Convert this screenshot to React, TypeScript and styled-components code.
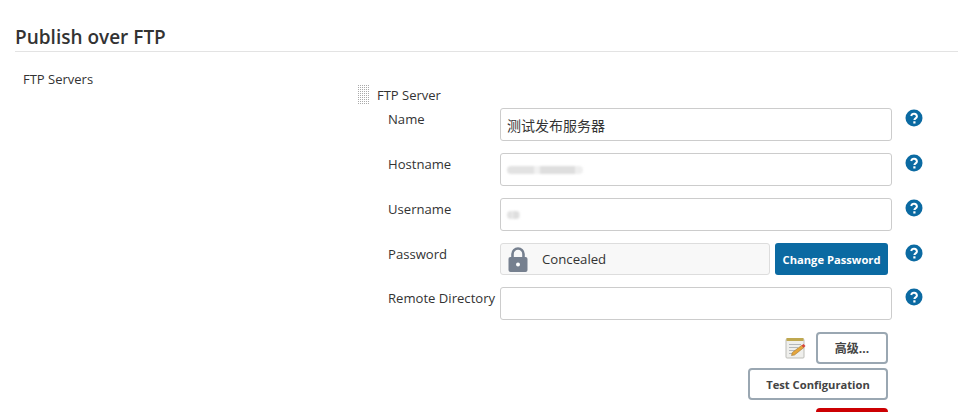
import React from "react";
import styled, { createGlobalStyle } from "styled-components";

const Global = createGlobalStyle`
  html, body { margin: 0; padding: 0; background: #fff; height: 412px; overflow: hidden; }
  body { font-family: "Open Sans", "Noto Sans", "Noto Sans CJK SC", sans-serif; color: #333; }
`;

const Page = styled.div`
  width: 958px;
  height: 412px;
  overflow: hidden;
  padding: 25px 0 0 15px;
  box-sizing: border-box;
`;

const SectionHeader = styled.h2`
  margin: 0;
  height: 26px;
  font-size: 19px;
  line-height: 24px;
  font-weight: 600;
  color: #333;
  border-bottom: 1px solid #e3e3e3;
`;

const Body = styled.div`
  display: grid;
  grid-template-columns: 342px 1fr;
`;

const TopLabel = styled.div`
  padding: 18px 0 0 8px;
  font-size: 13px;
  line-height: 18px;
  color: #333;
`;

const Server = styled.div`
  padding-top: 32px;
`;

const ServerHead = styled.div`
  display: flex;
  align-items: center;
  gap: 8px;
  height: 22px;
  font-size: 13px;
  color: #333;
`;

const Rows = styled.div`
  display: flex;
  flex-direction: column;
  gap: 12px;
  padding: 2px 0 0 31px;
`;

const Row = styled.div<{ $h: number }>`
  display: grid;
  grid-template-columns: 112px 392px auto;
  height: ${(p) => p.$h}px;
`;

const RowLabel = styled.div`
  font-size: 13.1px;
  line-height: 18px;
  padding-top: 2px;
  color: #333;
  white-space: nowrap;
`;

const Field = styled.div`
  position: relative;
  box-sizing: border-box;
  height: 33px;
  border: 1px solid #ccc;
  border-radius: 3px;
  background: #fff;
  display: flex;
  align-items: center;
  padding-left: 6px;
  font-size: 14px;
  font-family: "Open Sans", "Noto Sans CJK SC", sans-serif;
  color: #333;
`;

const Blur = styled.span<{ $w: number }>`
  display: block;
  width: ${(p) => p.$w}px;
  height: 8px;
  border-radius: 4px;
  background: linear-gradient(90deg, #e2e2e2 0 36%, #f1f1f1 36% 44%, #dedede 44% 90%, #eeeeee 90% 100%);
  filter: blur(1px);
`;

const PasswordWrap = styled.div`
  display: flex;
  gap: 5px;
`;

const Concealed = styled.div`
  box-sizing: border-box;
  width: 270px;
  height: 32px;
  border: 1px solid #ddd;
  border-radius: 3px;
  background: #f8f8f8;
  display: flex;
  align-items: center;
  gap: 14px;
  padding-left: 7px;
  font-size: 13.2px;
  color: #333;
`;

const PrimaryButton = styled.button`
  width: 113px;
  height: 32px;
  padding: 0;
  border: none;
  border-radius: 3px;
  background: #0b6aa2;
  color: #fff;
  font-family: inherit;
  font-size: 11.2px;
  font-weight: 700;
`;

const HelpCell = styled.div`
  padding: 1px 0 0 13px;
  height: 18px;
`;

const Actions = styled.div`
  display: flex;
  flex-direction: column;
  align-items: flex-end;
  width: 531px;
  margin-top: 12px;
  gap: 4px;
`;

const ActionRow = styled.div`
  display: flex;
  align-items: center;
  gap: 9px;
`;

const OutlineButton = styled.button<{ $w: number }>`
  box-sizing: border-box;
  width: ${(p) => p.$w}px;
  height: 32px;
  padding: 0;
  background: #fff;
  border: 2px solid #9aa7b2;
  border-radius: 4px;
  color: #444;
  font-family: "Open Sans", "Noto Sans CJK SC", sans-serif;
  font-size: ${(p) => (p.$w > 100 ? 11.2 : 12)}px;
  font-weight: 700;
`;

const DangerButton = styled.button`
  width: 72px;
  height: 32px;
  margin-top: 4px;
  border: none;
  border-radius: 4px;
  background: #cc0003;
  flex: none;
`;

const Help = () => (
  <svg width="18" height="18" viewBox="0 0 18 18">
    <circle cx="9" cy="9" r="8.5" fill="#0b6aa2" />
    <path d="M6.2 7a2.9 2.9 0 0 1 5.7.4c0 1.900-2.500 2-2.500 3.600" fill="none" stroke="#fff" strokeWidth="2" />
    <rect x="8.300" y="12.300" width="2.200" height="2.200" fill="#fff" />
  </svg>
);

const Handle = () => (
  <svg width="12" height="20" viewBox="0 0 12 20">
    {Array.from({ length: 10 }).flatMap((_, r) =>
      Array.from({ length: 6 }).map((_, c) => (
        <rect key={`${r}-${c}`} x={c * 2 + 1} y={r * 2} width="1" height="1" fill="#aaa" />
      ))
    )}
  </svg>
);

const Lock = () => (
  <svg width="20" height="25" viewBox="0 0 20 25">
    <path d="M4.500 11V7a5.500 5.500 0 0 1 11 0v4" fill="none" stroke="#76808f" strokeWidth="2.600" />
    <rect x="0.500" y="10" width="19" height="15" rx="2" fill="#76808f" />
    <circle cx="10" cy="17.500" r="2" fill="#fff" />
  </svg>
);

const Notepad = () => (
  <svg width="22" height="22" viewBox="0 0 22 22">
    <rect x="1" y="2" width="18" height="19" rx="1" fill="#efefec" stroke="#bdbdb8" />
    <rect x="1.500" y="1" width="17" height="3" fill="#bfa850" />
    <path d="M4 7.500h12M4 10.500h9M4 13.500h6M4 16.500h4" stroke="#b4b8bc" strokeWidth="1" />
    <path d="M6.500 18.500l.8-3L16.500 8.500l2.200 2.200L9.500 18z" fill="#e6a63c" stroke="#8f6a26" strokeWidth="0.500" />
    <path d="M16.500 8.500l2-1.500 2 2-1.800 1.700z" fill="#d8453c" />
  </svg>
);

const FormRow = ({ label, h = 33, children }: { label: string; h?: number; children: React.ReactNode }) => (
  <Row $h={h}>
    <RowLabel>{label}</RowLabel>
    {children}
    <HelpCell>
      <Help />
    </HelpCell>
  </Row>
);

export default function App() {
  return (
    <Page>
      <Global />
      <SectionHeader>Publish over FTP</SectionHeader>
      <Body>
        <TopLabel>FTP Servers</TopLabel>
        <Server>
          <ServerHead>
            <Handle />
            FTP Server
          </ServerHead>
          <Rows>
            <FormRow label="Name">
              <Field>测试发布服务器</Field>
            </FormRow>
            <FormRow label="Hostname">
              <Field>
                <Blur $w={76} />
              </Field>
            </FormRow>
            <FormRow label="Username">
              <Field>
                <Blur $w={13} />
              </Field>
            </FormRow>
            <FormRow label="Password" h={32}>
              <PasswordWrap>
                <Concealed>
                  <Lock />
                  Concealed
                </Concealed>
                <PrimaryButton>Change Password</PrimaryButton>
              </PasswordWrap>
            </FormRow>
            <FormRow label="Remote Directory">
              <Field />
            </FormRow>
          </Rows>
          <Actions>
            <ActionRow>
              <Notepad />
              <OutlineButton $w={72}>高级...</OutlineButton>
            </ActionRow>
            <OutlineButton $w={140}>Test Configuration</OutlineButton>
            <DangerButton />
          </Actions>
        </Server>
      </Body>
    </Page>
  );
}
